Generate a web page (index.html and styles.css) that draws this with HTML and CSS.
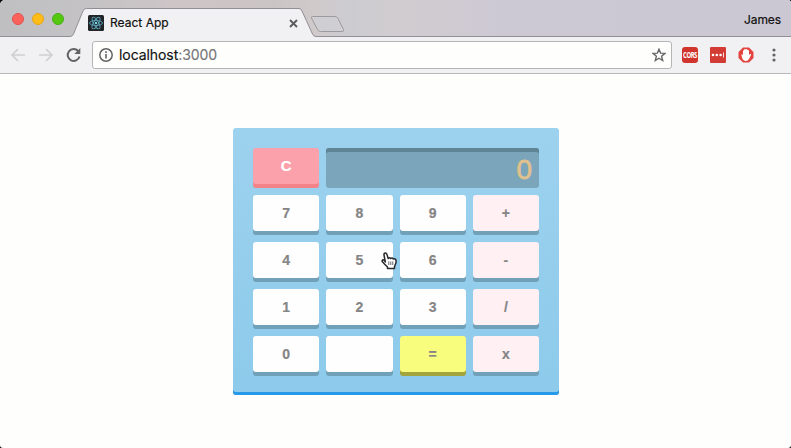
FILE: index.html
```html
<!DOCTYPE html>
<html lang="en">
<head>
<meta charset="utf-8">
<title>React App</title>
<link rel="stylesheet" href="styles.css">
</head>
<body>
<div class="window">
  <header class="tabbar">
    <svg class="tab-shapes" width="791" height="37" viewBox="0 0 791 37">
      <path d="M0 36.5H70Q72.500 36.500 73.500 34L83 11Q84 8.500 86.500 8.500H299Q301 8.500 302 11L312.500 34Q313.500 36.500 316 36.500H791V37H0Z" fill="#f1f1f3"/>
      <path d="M0 36.500H70Q72.500 36.500 73.500 34L83 11Q84 8.500 86.500 8.500H299Q301 8.500 302 11L312.500 34Q313.500 36.500 316 36.500H791" fill="none" stroke="#929094"/>
      <path d="M312.500 16.500H335Q337 16.500 338 18.500L343.500 29.500Q344.500 31.500 342 31.500H320.500Q318.500 31.500 317.500 29.500L311.500 18Q311 16.500 312.500 16.500Z" fill="#cfced2" stroke="#9e9a9c"/>
    </svg>
    <div class="lights"><i class="light red"></i><i class="light amber"></i><i class="light green"></i></div>
    <div class="tab">
      <svg class="favicon" width="16" height="16" viewBox="0 0 16 16">
        <rect width="16" height="16" rx="1.500" fill="#222528"/>
        <g fill="none" stroke="#5aa5bd" stroke-width=".9">
          <ellipse cx="8" cy="8" rx="6.500" ry="2.500"/>
          <ellipse cx="8" cy="8" rx="6.500" ry="2.500" transform="rotate(60 8 8)"/>
          <ellipse cx="8" cy="8" rx="6.500" ry="2.500" transform="rotate(120 8 8)"/>
        </g>
        <circle cx="8" cy="8" r="1.300" fill="#73d2dc"/>
      </svg>
      <span class="tab-title">React App</span>
      <svg class="close" width="9" height="9" viewBox="0 0 9 9"><path d="M1 1L8 8M8 1L1 8" stroke="#5c5c5e" stroke-width="1.900"/></svg>
    </div>
    <span class="profile">James</span>
  </header>
  <nav class="toolbar">
    <svg class="arrow" width="14" height="14" viewBox="0 0 14 14"><path d="M14 7H1.500M7 1L1 7L7 13" fill="none" stroke="#d0d0d2" stroke-width="1.700"/></svg>
    <svg class="arrow forward" width="14" height="14" viewBox="0 0 14 14"><path d="M0 7H12.500M7 1L13 7L7 13" fill="none" stroke="#d0d0d2" stroke-width="1.700"/></svg>
    <svg class="reload" width="16" height="16" viewBox="0 0 16 16"><path d="M12.200 4A6 6 0 1 0 13.500 9.500" fill="none" stroke="#636365" stroke-width="2"/><path d="M14.300 1V7H8.300Z" fill="#636365"/></svg>
    <div class="address">
      <svg class="info" width="14" height="14" viewBox="0 0 14 14"><circle cx="7" cy="7" r="6.200" fill="none" stroke="#636365" stroke-width="1.500"/><path d="M7 6V10.500M7 3.300V4.900" stroke="#636365" stroke-width="1.600"/></svg>
      <span class="url">localhost<span class="port">:3000</span></span>
      <svg class="star" width="14" height="14" viewBox="0 0 14 14"><path d="M7 1.200L8.600 5.100L12.900 5.400L9.600 8.200L10.700 12.500L7 10.200L3.300 12.500L4.400 8.200L1.100 5.400L5.400 5.100Z" fill="none" stroke="#68686a" stroke-width="1.400"/></svg>
    </div>
    <span class="extension cors"><span class="cors-label">CORS</span></span>
    <svg class="extension" width="16" height="16" viewBox="0 0 16 16"><rect width="16" height="16" rx="1" fill="#d33c34"/><g fill="#fff"><circle cx="3" cy="8" r="1.300"/><circle cx="6.800" cy="8" r="1.300"/><circle cx="10.600" cy="8" r="1.300"/><path d="M13.200 5.500H14V10.500H13.200Z"/></g></svg>
    <svg class="extension" width="16" height="16" viewBox="0 0 16 16"><path d="M5 .5H11L15.500 5V11L11 15.500H5L.5 11V5Z" fill="#e3443f"/><path d="M5 8V4Q5 3 6 3.200V2.500Q7 1.500 7.700 2.500Q9 1.500 9.500 3Q11 2.500 11 4V8L12 7Q13.500 6.500 13 8L11 12Q10 14 8 14Q5.500 14 4.500 12L3.500 8.500Q3.300 6.500 5 8Z" fill="#fff"/></svg>
    <svg class="more" width="4" height="14" viewBox="0 0 4 14"><g fill="#636365"><circle cx="2" cy="2" r="1.600"/><circle cx="2" cy="7" r="1.600"/><circle cx="2" cy="12" r="1.600"/></g></svg>
  </nav>
  <main class="page">
    <section class="calculator">
      <button class="key clear">C</button>
      <output class="display">0</output>
      <button class="key">7</button><button class="key">8</button><button class="key">9</button><button class="key operator">+</button>
      <button class="key">4</button><button class="key">5</button><button class="key">6</button><button class="key operator">-</button>
      <button class="key">1</button><button class="key">2</button><button class="key">3</button><button class="key operator">/</button>
      <button class="key">0</button><button class="key"></button><button class="key equals">=</button><button class="key operator">x</button>
    </section>
  </main>
  <svg class="pointer" width="17" height="18" viewBox="0 0 17 18"><path d="M4.300 10L3 3Q2.800 1 4.300 1Q5.600 1 6 2.500L7.200 6.500Q8.500 5 9.700 6.500Q11.300 5.300 12.200 7Q14.500 6.300 15 8.500Q15.400 10.500 14.300 12.500L13.500 14.500V16.500H6.500V15L3.500 12L1.200 9.500Q.8 8 2.200 7.800Q3.200 8 4.300 10Z" fill="#fff" stroke="#29292d" stroke-width="1.500" stroke-linejoin="round"/><path d="M7.700 9.500V13M9.700 9.500V13M11.700 9.500V13" stroke="#88888c" stroke-width="1.300"/></svg>
</div>
</body>
</html>
```

FILE: styles.css
```css
* { box-sizing: border-box; }
html { background: #08080c; }
body { margin: 0; font-family: Inter, sans-serif; }
svg { display: block; flex: none; }
.window { position: relative; width: 791px; height: 448px; overflow: hidden; border-radius: 5px 3px 3px 3px; background: #fefefd; }
.tabbar { position: relative; height: 37px; display: flex; align-items: flex-start; background: linear-gradient(90deg, #bfbfc1 0, #c4c2c4 90px, #cec5c7 180px, #cbc4c5 270px, #d0c9ca 310px, #ccccd0 350px, #d1cccf 400px, #cdc9d4 500px, #cbc8d3 791px); }
.tab-shapes { position: absolute; inset: 0; }
.lights { position: relative; display: flex; gap: 8px; padding: 13px 0 0 12px; }
.light { width: 12px; height: 12px; border-radius: 50%; border: 1px solid; }
.red { background: #fb625c; border-color: #e3514e; }
.amber { background: #fdbc17; border-color: #e6a51b; }
.green { background: #53c80f; border-color: #47ae16; }
.tab { position: relative; display: flex; align-items: center; width: 210px; height: 16px; margin: 15px 0 0 24px; }
.tab-title { margin: -1px 0 0 6px; font-size: 12px; letter-spacing: .02px; color: #111; white-space: nowrap; -webkit-text-stroke: .2px; }
.close { margin-left: auto; }
.profile { position: relative; margin: 12px 10px 0 auto; font-size: 12px; line-height: 15px; letter-spacing: -.1px; color: #111; -webkit-text-stroke: .2px; }
.toolbar { height: 37px; display: flex; align-items: center; padding: 0 15px 0 11px; background: #f1f1f3; border-bottom: 1px solid #b9b9bb; }
.forward { margin-left: 14px; }
.reload { margin: 0 0 0 13px; }
.address { display: flex; align-items: center; width: 580px; height: 28px; margin-left: 10px; padding: 0 5px 0 6px; background: #fefefd; border: 1px solid #b5b5b7; border-radius: 3px; }
.url { margin-left: 6px; font-size: 14px; line-height: 20px; letter-spacing: -.07px; color: #111; -webkit-text-stroke: .15px; }
.port { color: #77777a; }
.star { margin-left: auto; }
.extension { margin-left: 12px; flex: none; }
.cors { width: 16px; height: 16px; margin-left: 10px; display: flex; align-items: center; justify-content: center; border-radius: 3px; background: #d0342c; color: #fff; font: bold 6px/10px "Open Sans", sans-serif; letter-spacing: -.5px; }
.cors-label { transform: scaleY(1.4); }
.more { margin-left: 18px; }
.page { display: flex; justify-content: center; padding-top: 54px; }
.calculator { display: grid; grid-template-columns: repeat(4, 1fr); grid-template-rows: repeat(5, 40px); gap: 7px; width: 326px; height: 267px; margin-left: 1px; padding: 20px; border-radius: 3px; background: linear-gradient(#9dd2ee, #8dcaeb); box-shadow: inset 0 -3px #2799ea; }
.key { height: 36px; padding: 0; border: 0; border-radius: 3px; background: #fefefe; box-shadow: 0 4px #71a1b9; color: #858585; font: bold 14px/36px "Liberation Sans", Arial, sans-serif; -webkit-text-stroke: .2px; }
.clear { background: #fba1ab; box-shadow: 0 4px #f38289; color: #fff; font-size: 15px; }
.operator { background: #fff0f4; }
.equals { background: #f9fd7e; box-shadow: 0 4px #a4a43c; }
.display { grid-column: span 3; height: 40px; padding: 2px 7px 0 0; border-radius: 3px; background: #7aa5ba; box-shadow: inset 0 4px #608594; color: #dfc18f; font: 500 28px/40px "Liberation Sans", Arial, sans-serif; text-align: right; -webkit-text-stroke: .8px; }
.pointer { position: absolute; left: 381px; top: 252px; }
```
